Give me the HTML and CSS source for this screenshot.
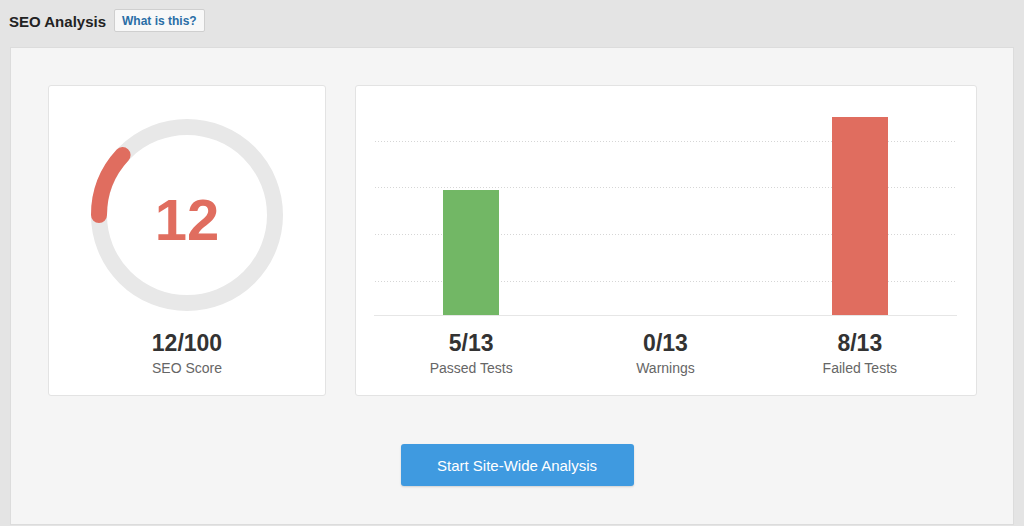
FILE: index.html
```html
<!DOCTYPE html>
<html lang="en">

<head>
    <meta charset="UTF-8">
    <meta name="viewport" content="width=device-width, initial-scale=1.0">
    <title>SEO Analysis</title>
    <link rel="stylesheet" href="styles.css">
</head>

<body>

    <header class="page-head">
        <h1>SEO Analysis</h1>
        <button class="help-btn">What is this?</button>
    </header>

    <main class="panel">

        <div class="cards">

            <!-- Score ring -->
            <section class="card score-card">
                <svg class="ring" viewBox="0 0 192 192" width="192" height="192">
                    <circle cx="96" cy="96" r="88" fill="none" stroke="#e8e8e8" stroke-width="16"/>
                    <path d="M 8 96 A 88 88 0 0 1 31.6 36" fill="none" stroke="#e06d5f" stroke-width="16" stroke-linecap="round"/>
                    <text x="96" y="121" text-anchor="middle" class="ring-num">12</text>
                </svg>
                <div class="stat-num">12/100</div>
                <div class="stat-label">SEO Score</div>
            </section>

            <!-- Test results chart -->
            <section class="card chart-card">
                <div class="plot">
                    <div class="grid-line" style="top: 46px"></div>
                    <div class="grid-line" style="top: 92px"></div>
                    <div class="grid-line" style="top: 139px"></div>
                    <div class="grid-line" style="top: 186px"></div>

                    <div class="col"><div class="bar passed" style="height: 125px"></div></div>
                    <div class="col"><div class="bar warning" style="height: 0px"></div></div>
                    <div class="col"><div class="bar failed" style="height: 198px"></div></div>
                </div>

                <div class="legend">
                    <div class="col-label">
                        <div class="stat-num">5/13</div>
                        <div class="stat-label">Passed Tests</div>
                    </div>
                    <div class="col-label">
                        <div class="stat-num">0/13</div>
                        <div class="stat-label">Warnings</div>
                    </div>
                    <div class="col-label">
                        <div class="stat-num">8/13</div>
                        <div class="stat-label">Failed Tests</div>
                    </div>
                </div>
            </section>

        </div>

        <div class="actions">
            <button class="start-btn">Start Site-Wide Analysis</button>
        </div>

    </main>

</body>

</html>
```

FILE: styles.css
```css
:root {
    --page: #e4e4e4;
    --panel: #f5f5f5;
    --border: #dcdcdc;
    --text: #333;
    --muted: #666;
    --red: #e06d5f;
    --green: #72b765;
    --blue: #3f9ae0;
}

* {
    margin: 0;
    box-sizing: border-box;
    font-family: "Liberation Sans", Arial, sans-serif;
}

body {
    background-color: var(--page);
    color: var(--text);
}

.page-head {
    display: flex;
    align-items: center;
    gap: 8px;
    padding: 9px 9px 15px 9px;
}

.page-head h1 {
    font-size: 15px;
    font-weight: bold;
    color: #222;
    padding-top: 2px;
}

.help-btn {
    appearance: none;
    background-color: #f8f8f8;
    border: 1px solid #cfcfcf;
    border-radius: 2px;
    color: #2a6ea6;
    font-size: 12px;
    font-weight: bold;
    height: 23px;
    padding: 0 7px;
}

.panel {
    margin: 0 10px;
    background-color: var(--panel);
    border: 1px solid var(--border);
    padding: 37px 36px 38px 37px;
}

.cards {
    display: grid;
    grid-template-columns: 278px 1fr;
    gap: 29px;
}

.card {
    background-color: #fff;
    border: 1px solid #e3e3e3;
    border-radius: 3px;
    height: 311px;
}

/* Score card */

.score-card {
    display: flex;
    flex-direction: column;
    align-items: center;
    padding-top: 33px;
}

.ring-num {
    font-family: "Liberation Sans", Arial, sans-serif;
    font-size: 58px;
    font-weight: bold;
    fill: var(--red);
}

.score-card .stat-num {
    margin-top: 18px;
}

.stat-num {
    font-size: 23px;
    line-height: 28px;
    font-weight: bold;
    color: var(--text);
}

.stat-label {
    font-size: 14px;
    line-height: 18px;
    color: var(--muted);
    margin-top: 2px;
}

/* Chart card */

.chart-card {
    padding: 9px 19px 0 18px;
}

.plot {
    position: relative;
    display: grid;
    grid-template-columns: repeat(3, 1fr);
    height: 221px;
    border-bottom: 1px solid #e6e6e6;
}

.grid-line {
    position: absolute;
    left: 1px;
    right: 2px;
    height: 1px;
    background-image: linear-gradient(to right, #d6d6d6 1px, transparent 1px);
    background-size: 3px 1px;
}

.col {
    display: flex;
    justify-content: center;
    align-items: flex-end;
}

.bar {
    position: relative;
    width: 56px;
}

.bar.passed {
    background-color: var(--green);
}

.bar.failed {
    background-color: var(--red);
}

.legend {
    display: grid;
    grid-template-columns: repeat(3, 1fr);
    margin-top: 13px;
}

.col-label {
    text-align: center;
}

/* Button */

.actions {
    display: flex;
    justify-content: center;
    padding-left: 9px;
    margin-top: 48px;
}

.start-btn {
    appearance: none;
    border: none;
    background-color: var(--blue);
    color: #fff;
    font-size: 15px;
    width: 233px;
    height: 42px;
    border-radius: 3px;
    box-shadow: 0 1px 2px rgba(0, 0, 0, 0.15);
    cursor: pointer;
}
```
